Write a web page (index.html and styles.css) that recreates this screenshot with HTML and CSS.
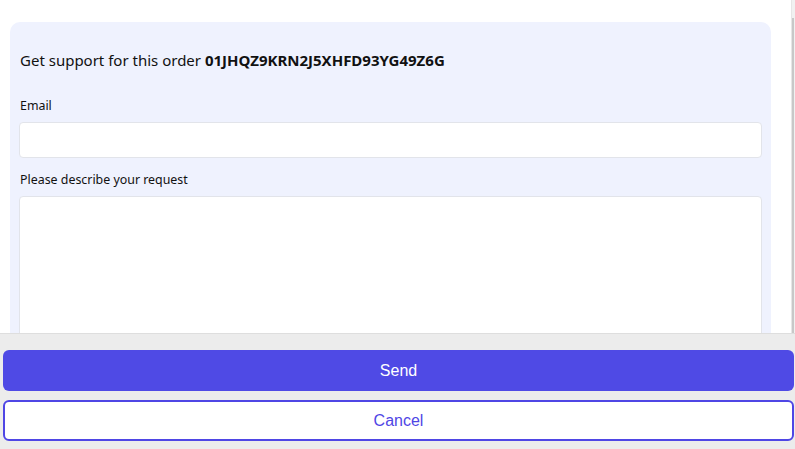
FILE: index.html
```html
<html>
<head>
    <title>Order support</title>
    <link rel="stylesheet" href="styles.css">
</head>
<body>
    <div class="page">
        <form class="support-card">
            <h2 class="support-title">Get support for this order <b>01JHQZ9KRN2J5XHFD93YG49Z6G</b></h2>

            <div class="field">
                <label for="email">Email</label>
                <input id="email" type="email" />
            </div>

            <div class="field">
                <label for="request">Please describe your request</label>
                <textarea id="request"></textarea>
            </div>
        </form>
    </div>

    <div class="actions">
        <button class="btn btn-primary" type="button">Send</button>
        <button class="btn btn-outline" type="button">Cancel</button>
    </div>

    <div class="scroll-track"><div class="scroll-thumb"></div></div>
</body>
</html>
```

FILE: styles.css
```css
body{
    margin: 0;
    background-color: #ffffff;
    font-family: "Noto Sans", "Open Sans", sans-serif;
    color: #111111;
}
.page{
    padding: 22px 24px 0 10px;
}
.support-card{
    background-color: #eff2fe;
    border-radius: 10px;
    padding: 26px 9px 40px 9px;
    margin: 0;
}
.support-title{
    margin: 0 0 24px 1px;
    font-size: 15px;
    line-height: 24px;
    font-weight: normal;
}
.support-title b{
    font-weight: bold;
}
.field{
    display: flex;
    flex-direction: column;
    margin-bottom: 12px;
}
.field label{
    font-size: 12.4px;
    line-height: 18px;
    margin: 1px 0 7px 1px;
}
.field input,
.field textarea{
    box-sizing: border-box;
    width: 100%;
    border: 1px solid #e2e4ea;
    border-radius: 4px;
    background-color: #ffffff;
    font-family: inherit;
    font-size: 14px;
    padding: 6px 8px;
    margin: 0;
}
.field input{
    height: 36px;
}
.field textarea{
    height: 200px;
    resize: none;
}

/* footer sits over the form */
.actions{
    position: fixed;
    left: 0;
    right: 0;
    bottom: 0;
    height: 116px;
    box-sizing: border-box;
    background-color: #ececec;
    border-top: 1px solid #dedede;
    padding: 16px 1px 8px 3px;
    display: flex;
    flex-direction: column;
    gap: 9px;
}
.btn{
    height: 41px;
    border-radius: 6px;
    font-family: "Liberation Sans", Arial, sans-serif;
    font-size: 16px;
    cursor: pointer;
}
.btn-primary{
    background-color: #4f4ae5;
    color: #ffffff;
    border: none;
}
.btn-outline{
    background-color: #ffffff;
    color: #4f46e5;
    border: 2px solid #4f46e5;
}
.scroll-track{
    position: fixed;
    top: 0;
    right: 0;
    width: 3px;
    height: 333px;
    background-color: #f1f1f1;
    border-left: 1px solid #e6e6e6;
}
.scroll-thumb{
    margin-top: 18px;
    width: 2px;
    height: 315px;
    background-color: #c8c8c8;
}
```
